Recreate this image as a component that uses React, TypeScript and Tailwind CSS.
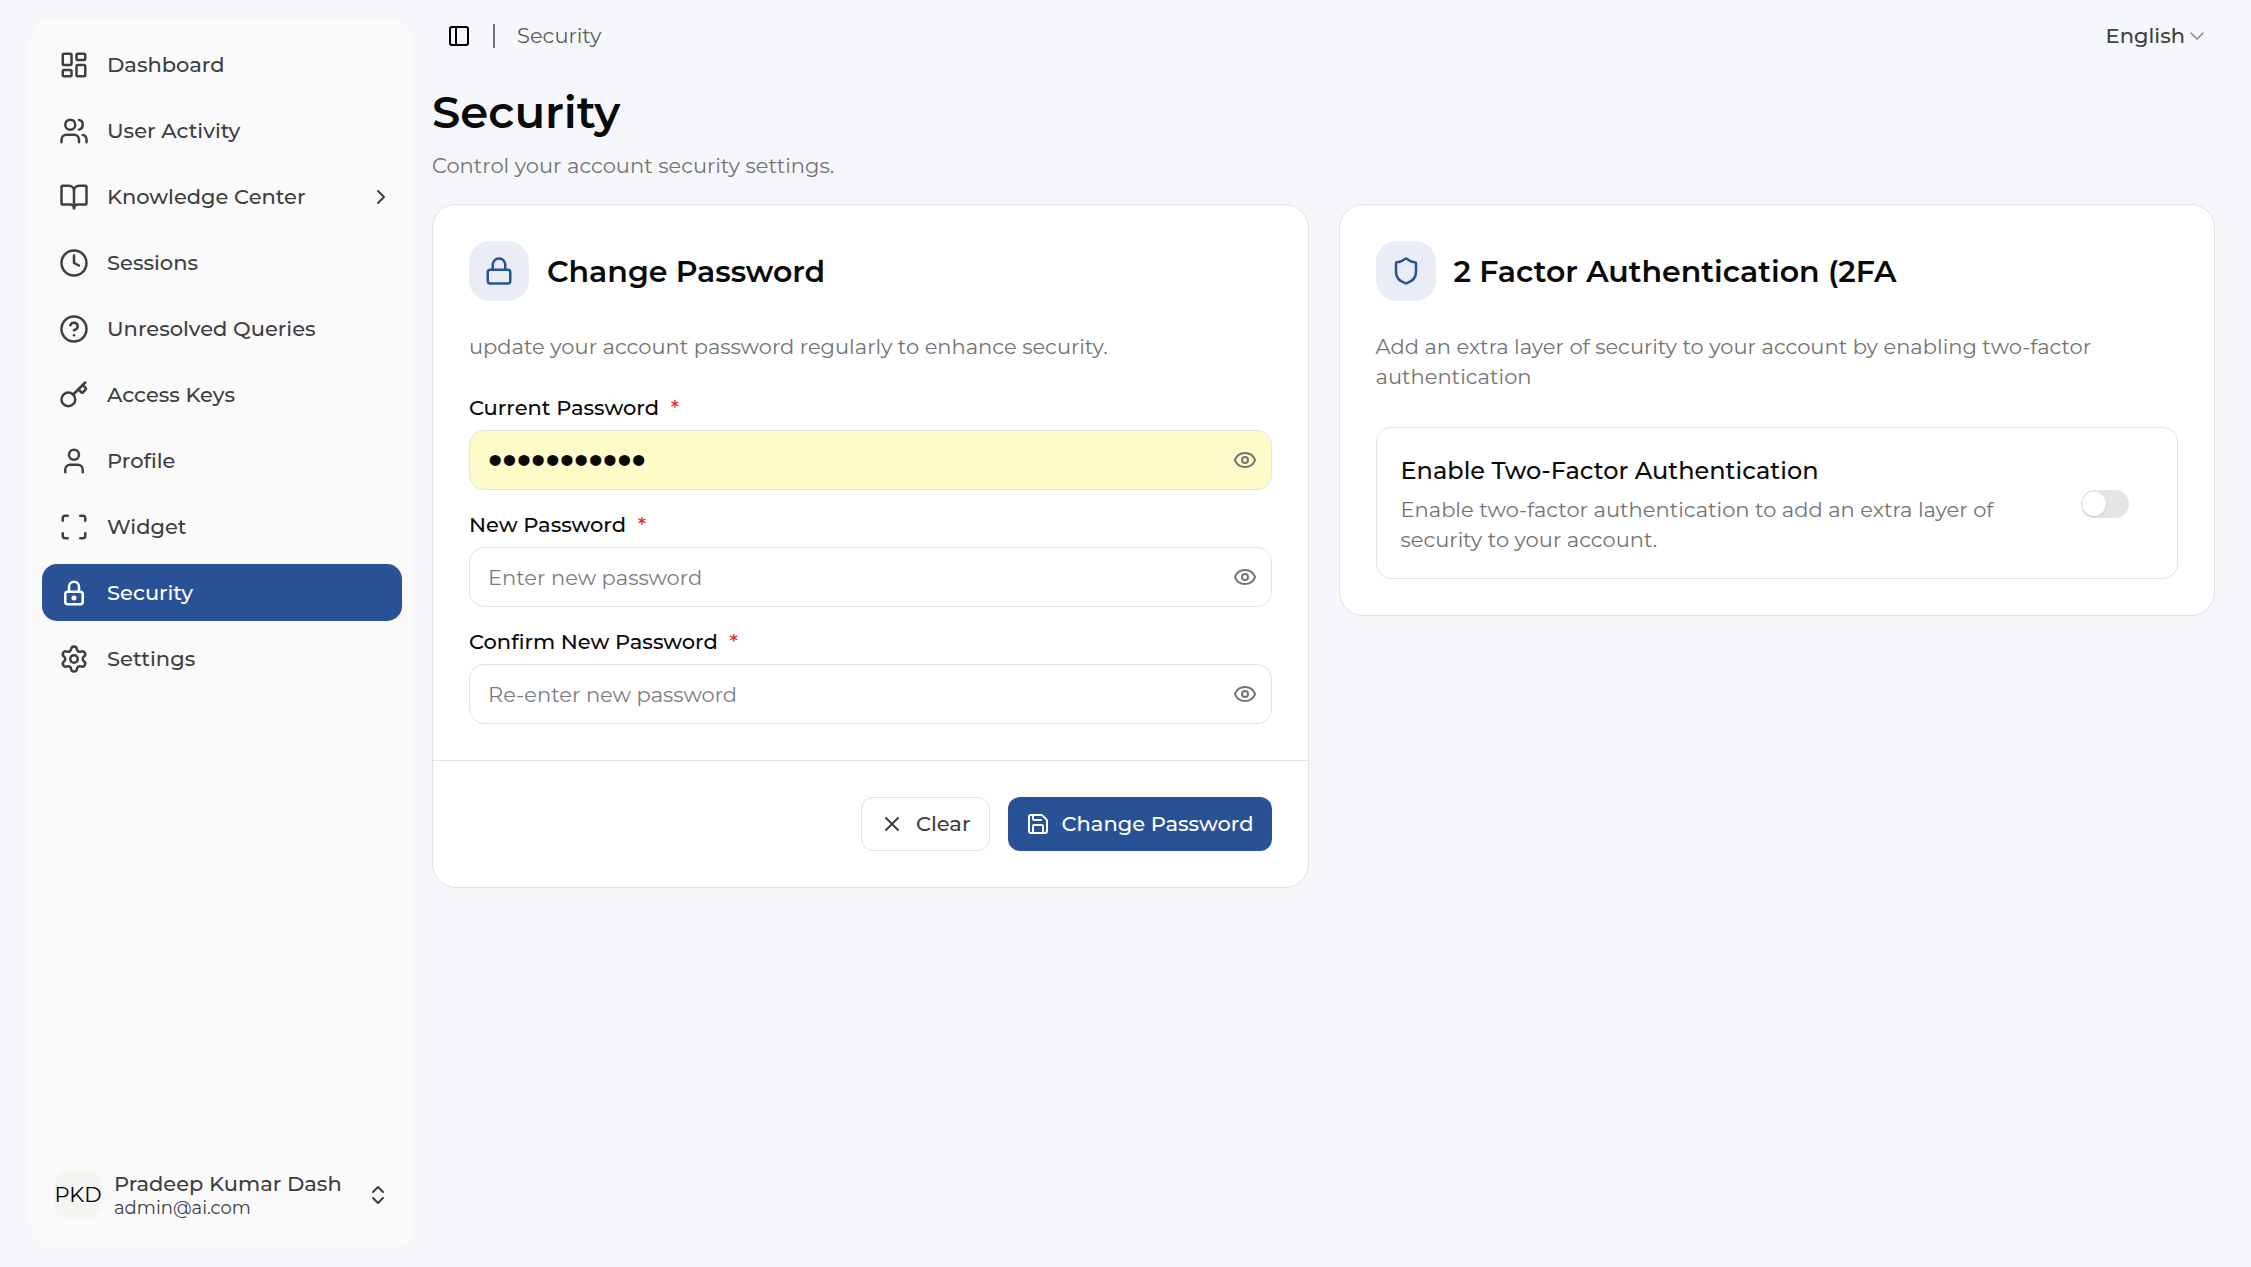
import { useState } from "react";
import type { ComponentType } from "react";
import {
  BookOpen,
  ChevronDown,
  ChevronRight,
  ChevronsUpDown,
  CircleHelp,
  Clock,
  Eye,
  Key,
  LayoutDashboard,
  Lock,
  PanelLeft,
  Save,
  Scan,
  Settings,
  Shield,
  User,
  Users,
  X,
} from "lucide-react";
import { TbLock } from "react-icons/tb";

type Icon = ComponentType<{ size?: number; className?: string }>;

interface NavItem {
  label: string;
  icon: Icon;
  expandable?: boolean;
}

const navItems: NavItem[] = [
  { label: "Dashboard", icon: LayoutDashboard },
  { label: "User Activity", icon: Users },
  { label: "Knowledge Center", icon: BookOpen, expandable: true },
  { label: "Sessions", icon: Clock },
  { label: "Unresolved Queries", icon: CircleHelp },
  { label: "Access Keys", icon: Key },
  { label: "Profile", icon: User },
  { label: "Widget", icon: Scan },
  { label: "Security", icon: TbLock },
  { label: "Settings", icon: Settings },
];

function Sidebar({ active }: { active: string }) {
  return (
    <aside className="flex w-96 shrink-0 flex-col justify-between rounded-3xl bg-[#fafafa] px-3 py-[18px] text-[#3f3f3f]">
      <nav className="flex flex-col gap-[9px]">
        {navItems.map(({ label, icon: Icon, expandable }) => (
          <a
            key={label}
            href="#"
            className={
              label === active
                ? "flex h-[57px] items-center gap-[18px] rounded-[15px] bg-[#295296] px-[17px] font-medium text-white"
                : "flex h-[57px] items-center gap-[18px] rounded-[15px] px-[17px] font-medium"
            }
          >
            <Icon size={30} className="shrink-0" />
            <span className="flex-1">{label}</span>
            {expandable && <ChevronRight size={24} className="-mr-2" />}
          </a>
        ))}
      </nav>
      <button type="button" className="flex h-[72px] items-center gap-3 px-3 text-left">
        <span className="flex size-12 shrink-0 items-center justify-center rounded-[15px] bg-[#f5f5f1] text-black">PKD</span>
        <span className="flex flex-1 flex-col">
          <span className="font-medium leading-[26px]">Pradeep Kumar Dash</span>
          <span className="text-lg leading-[22px]">admin@ai.com</span>
        </span>
        <ChevronsUpDown size={24} />
      </button>
    </aside>
  );
}

interface PasswordFieldProps {
  id: string;
  label: string;
  placeholder?: string;
  initial?: string;
}

function PasswordField({ id, label, placeholder, initial = "" }: PasswordFieldProps) {
  const [value, setValue] = useState(initial);
  const [visible, setVisible] = useState(false);
  const masked = value !== "" && !visible;

  return (
    <div className="flex flex-col gap-2">
      <label htmlFor={id} className="font-medium leading-7 text-[#0a0a0a]">
        {label} <span className="ml-1.5 text-[#e7272d]">*</span>
      </label>
      <div
        className={
          initial
            ? "flex h-[60px] items-center rounded-[15px] border border-[#e3e3e5] bg-[#fffbc8] pr-[14px]"
            : "flex h-[60px] items-center rounded-[15px] border border-[#e3e3e5] pr-[14px]"
        }
      >
        <input
          id={id}
          type={visible ? "text" : "password"}
          value={value}
          placeholder={placeholder}
          onChange={(e) => setValue(e.target.value)}
          className={
            masked
              ? "h-full min-w-0 flex-1 bg-transparent pl-[18px] font-['Liberation_Sans',sans-serif] text-[41px] text-[#0a0a0a] outline-none"
              : "h-full min-w-0 flex-1 bg-transparent pl-[18px] text-[#0a0a0a] outline-none placeholder:text-[#7c7c7c]"
          }
        />
        <button type="button" aria-label="Show password" onClick={() => setVisible(!visible)} className="text-[#737373]">
          <Eye size={24} />
        </button>
      </div>
    </div>
  );
}

function CardTitle({ icon: Icon, title }: { icon: Icon; title: string }) {
  return (
    <div className="flex items-center gap-[18px]">
      <span className="flex size-[60px] items-center justify-center rounded-[21px] bg-[#e9edf5] text-[#295296]">
        <Icon size={30} />
      </span>
      <h2 className="pt-0.5 text-3xl leading-9 font-semibold text-[#0a0a0a]">{title}</h2>
    </div>
  );
}

function ChangePasswordCard() {
  return (
    <form className="rounded-3xl border border-[#e3e3e5] bg-white">
      <div className="p-9">
        <CardTitle icon={Lock} title="Change Password" />
        <p className="mt-[31px] text-[#737373]">update your account password regularly to enhance security.</p>
        <div className="mt-8 flex flex-col gap-[21px]">
          <PasswordField id="current" label="Current Password" initial="password123" />
          <PasswordField id="new" label="New Password" placeholder="Enter new password" />
          <PasswordField id="confirm" label="Confirm New Password" placeholder="Re-enter new password" />
        </div>
      </div>
      <div className="flex justify-end gap-[18px] border-t border-[#e3e3e5] p-9">
        <button
          type="reset"
          className="flex h-[54px] items-center gap-3 rounded-xl border border-[#e3e3e5] px-[18px] font-medium text-[#3f3f3f]"
        >
          <X size={24} />
          Clear
        </button>
        <button
          type="button"
          className="flex h-[54px] items-center gap-3 rounded-xl bg-[#295296] px-[18px] font-medium text-white"
        >
          <Save size={24} />
          Change Password
        </button>
      </div>
    </form>
  );
}

function TwoFactorCard() {
  const [enabled, setEnabled] = useState(false);

  return (
    <section className="rounded-3xl border border-[#e3e3e5] bg-white p-9">
      <CardTitle icon={Shield} title="2 Factor Authentication (2FA" />
      <p className="mt-[31px] text-[#737373]">
        Add an extra layer of security to your account by enabling two-factor authentication
      </p>
      <div className="mt-[35px] flex items-center justify-between rounded-[15px] border border-[#e3e3e5] pt-6 pr-12 pb-[23px] pl-6">
        <div className="max-w-[620px]">
          <label htmlFor="two-factor" className="block text-2xl leading-[38px] font-medium text-[#0a0a0a]">
            Enable Two-Factor Authentication
          </label>
          <p className="mt-[5px] text-[#737373]">
            Enable two-factor authentication to add an extra layer of security to your account.
          </p>
        </div>
        <input
          id="two-factor"
          type="checkbox"
          role="switch"
          checked={enabled}
          onChange={(e) => setEnabled(e.target.checked)}
          className="flex h-7 w-12 shrink-0 appearance-none items-center rounded-full bg-[#e5e5e5] px-px before:size-6 before:rounded-full before:bg-white before:shadow-sm checked:justify-end checked:bg-[#295296]"
        />
      </div>
    </section>
  );
}

export default function App() {
  return (
    <div className="flex min-h-screen bg-[#f5f7fb] pl-[30px] font-['Montserrat','Inter',sans-serif] text-[21px] leading-[30px]">
      <div className="flex py-[18px]">
        <Sidebar active="Security" />
      </div>
      <main className="flex-1 pr-9 pl-[18px]">
        <header className="flex h-[72px] items-center justify-between pr-1.5 pl-[15px]">
          <div className="flex items-center gap-[22px]">
            <button type="button" aria-label="Toggle sidebar">
              <PanelLeft size={24} />
            </button>
            <span className="h-6 w-0.5 bg-[#737373]" />
            <span className="text-[#5c5c5c]">Security</span>
          </div>
          <button type="button" className="flex items-center font-medium text-[#3f3f3f]">
            English
            <ChevronDown size={24} strokeWidth={1.5} className="text-[#8a8a8a]" />
          </button>
        </header>
        <h1 className="mt-3 text-[45px] leading-[56px] font-semibold text-[#0a0a0a]">Security</h1>
        <p className="mt-[11px] text-[#737373]">Control your account security settings.</p>
        <div className="mt-[23px] grid grid-cols-2 items-start gap-[30px]">
          <ChangePasswordCard />
          <TwoFactorCard />
        </div>
      </main>
    </div>
  );
}
